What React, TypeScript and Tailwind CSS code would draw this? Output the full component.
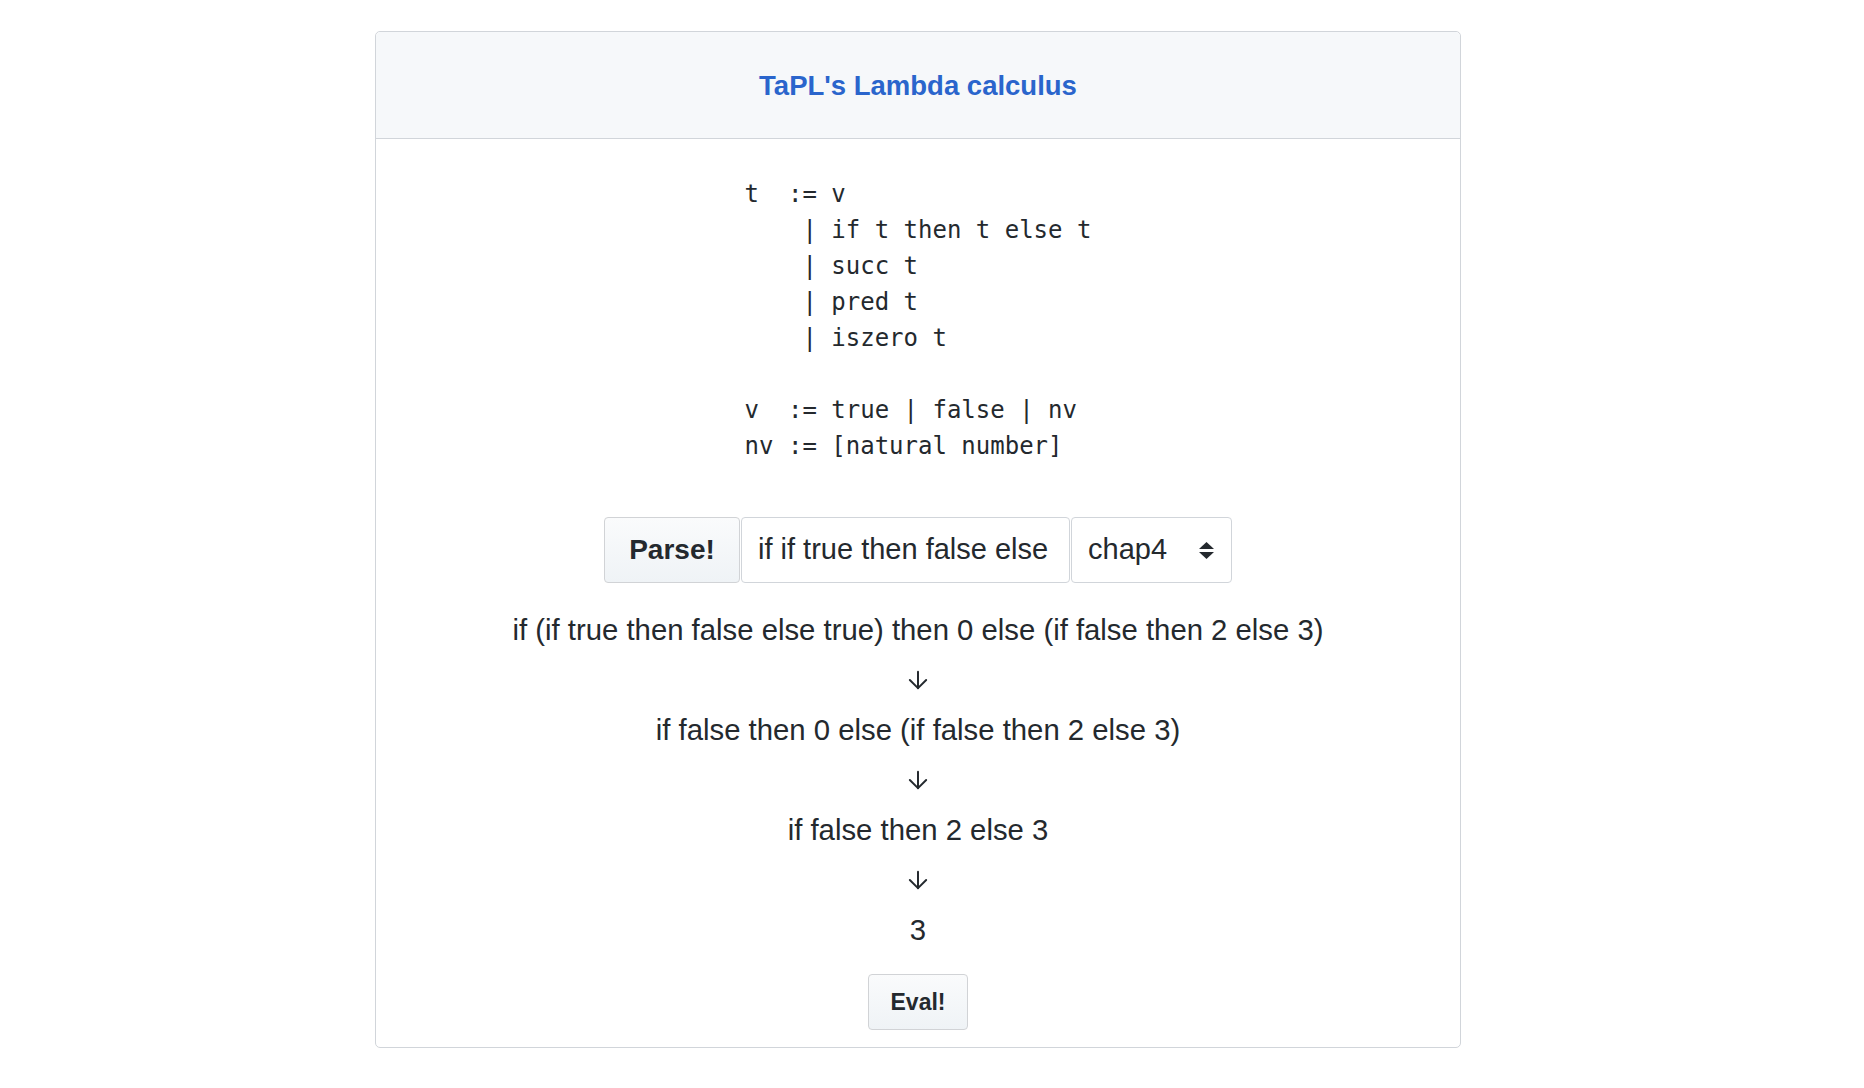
import React, { useState } from "react";
import { ArrowDown } from "lucide-react";

const steps = [
  "if (if true then false else true) then 0 else (if false then 2 else 3)",
  "if false then 0 else (if false then 2 else 3)",
  "if false then 2 else 3",
  "3",
];

const grammar = `t  := v
    | if t then t else t
    | succ t
    | pred t
    | iszero t

v  := true | false | nv
nv := [natural number]`;

const btnClasses =
  "rounded-[4px] border border-[#d1d3d6] bg-gradient-to-b from-[#fafbfc] to-[#eff3f6] font-bold text-[#24292e]";

const App: React.FC = () => {
  const [source, setSource] = useState("if if true then false else true then 0 else if false then 2 else 3");
  const [chapter, setChapter] = useState("chap4");

  return (
    <div className="min-h-screen bg-white pt-[31px] font-['Liberation_Sans',Arial,sans-serif] text-[#24292e]">
      <div className="ml-[375px] w-[1086px] rounded-[5px] border border-[#d1d5da]">
        {/* header */}
        <div className="flex h-[107px] items-center justify-center rounded-t-[5px] border-b border-[#d1d5da] bg-[#f6f8fa] pt-[2px]">
          <h1 className="text-[27.5px] font-bold text-[#2a65cc]">TaPL's Lambda calculus</h1>
        </div>

        <div className="flex flex-col items-center pt-[37px] pb-[17px]">
          <pre className="text-left font-['DejaVu_Sans_Mono',monospace] text-[24px] leading-[36px] text-[#24292e]">
            {grammar}
          </pre>

          <div className="mt-[53px] flex h-[66px] gap-px">
            <button className={`${btnClasses} w-[136px] text-[28px]`}>Parse!</button>
            <input
              value={source}
              onChange={(e) => setSource(e.target.value)}
              className="w-[329px] rounded-[4px] border border-[#d1d5da] bg-white px-[16px] text-[29px] text-[#24292e] outline-none"
            />
            <div className="relative w-[161px]">
              <select
                value={chapter}
                onChange={(e) => setChapter(e.target.value)}
                className="h-full w-full appearance-none rounded-[4px] border border-[#d1d5da] bg-white pl-[16px] text-[29px] text-[#24292e] outline-none"
              >
                <option value="chap4">chap4</option>
                <option value="chap7">chap7</option>
              </select>
              <svg
                className="pointer-events-none absolute top-[25px] right-[18px]"
                width="15"
                height="17"
                viewBox="0 0 15 17"
              >
                <path d="M7.5 0 L15 7 L0 7 Z" fill="#24292e" />
                <path d="M0 10 L15 10 L7.5 17 Z" fill="#24292e" />
              </svg>
            </div>
          </div>

          <div className="mt-[22px] flex flex-col items-center text-[29.3px] leading-[50px]">
            {steps.map((step, i) => (
              <React.Fragment key={i}>
                {i > 0 && (
                  <div className="flex h-[50px] items-center justify-center">
                    <ArrowDown size={28} strokeWidth={1.7} color="#24292e" />
                  </div>
                )}
                <div>{step}</div>
              </React.Fragment>
            ))}
          </div>

          <button className={`${btnClasses} mt-[19px] h-[56px] w-[100px] text-[23px]`}>Eval!</button>
        </div>
      </div>
    </div>
  );
};

export default App;
